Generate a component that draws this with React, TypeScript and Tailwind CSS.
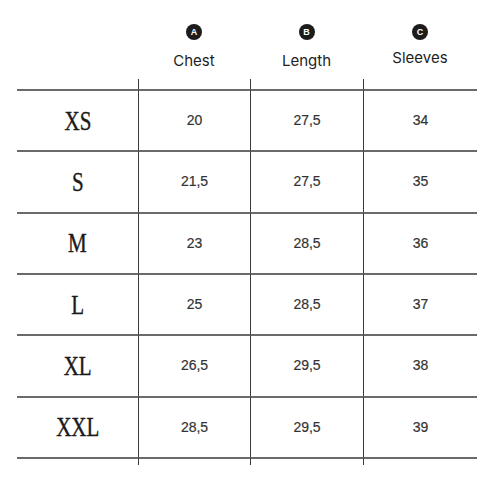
const headers = [
  { letter: "A", label: "Chest", offset: "mt-[13px]" },
  { letter: "B", label: "Length", offset: "mt-[13px]" },
  { letter: "C", label: "Sleeves", offset: "mt-[10px]" },
];

const rows = [
  ["XS", "20", "27,5", "34"],
  ["S", "21,5", "27,5", "35"],
  ["M", "23", "28,5", "36"],
  ["L", "25", "28,5", "37"],
  ["XL", "26,5", "29,5", "38"],
  ["XXL", "28,5", "29,5", "39"],
];

const App = () => {
  return (
    <div className="w-[500px] h-[500px] bg-white">
      <div className="h-[79px] ml-[138px] grid grid-cols-[112px_113px_114px] pt-[24px]">
        {headers.map((h) => (
          <div key={h.letter} className="flex flex-col items-center">
            <div className="w-[16px] h-[16px] rounded-full bg-[#1c1c1c] flex items-center justify-center text-white text-[9px] font-bold leading-none font-['Liberation_Sans',sans-serif]">
              {h.letter}
            </div>
            <div
              className={`${h.offset} text-[15px] leading-none text-[#1e1e1e] font-['Inter',sans-serif]`}
            >
              {h.label}
            </div>
          </div>
        ))}
      </div>

      <div className="ml-[17px] grid grid-cols-[121px_112px_113px_114px]">
        <div className="h-[10px]" />
        <div className="h-[10px] border-l border-[#3a3a3a]" />
        <div className="h-[10px] border-l border-[#3a3a3a]" />
        <div className="h-[10px] border-l border-[#3a3a3a]" />

        {rows.map((r) =>
          r.map((cell, i) =>
            i === 0 ? (
              <div
                key={r[0] + i}
                className="h-[61.33px] border-t-2 border-[#6a6a6a] flex items-center justify-center"
              >
                <span className="inline-block scale-x-[0.75] text-[28px] leading-none text-[#1a1a1a] [-webkit-text-stroke:0.4px_#1a1a1a] font-['Liberation_Serif',serif]">
                  {cell}
                </span>
              </div>
            ) : (
              <div
                key={r[0] + i}
                className="h-[61.33px] border-t-2 border-t-[#6a6a6a] border-l border-l-[#3a3a3a] flex items-center justify-center text-[14px] text-[#333] [-webkit-text-stroke:0.2px_#333] font-['Liberation_Sans',sans-serif]"
              >
                {cell}
              </div>
            )
          )
        )}

        <div className="h-[8px] border-t-2 border-[#6a6a6a]" />
        <div className="h-[8px] border-t-2 border-t-[#6a6a6a] border-l border-l-[#3a3a3a]" />
        <div className="h-[8px] border-t-2 border-t-[#6a6a6a] border-l border-l-[#3a3a3a]" />
        <div className="h-[8px] border-t-2 border-t-[#6a6a6a] border-l border-l-[#3a3a3a]" />
      </div>
    </div>
  );
};

export default App;
